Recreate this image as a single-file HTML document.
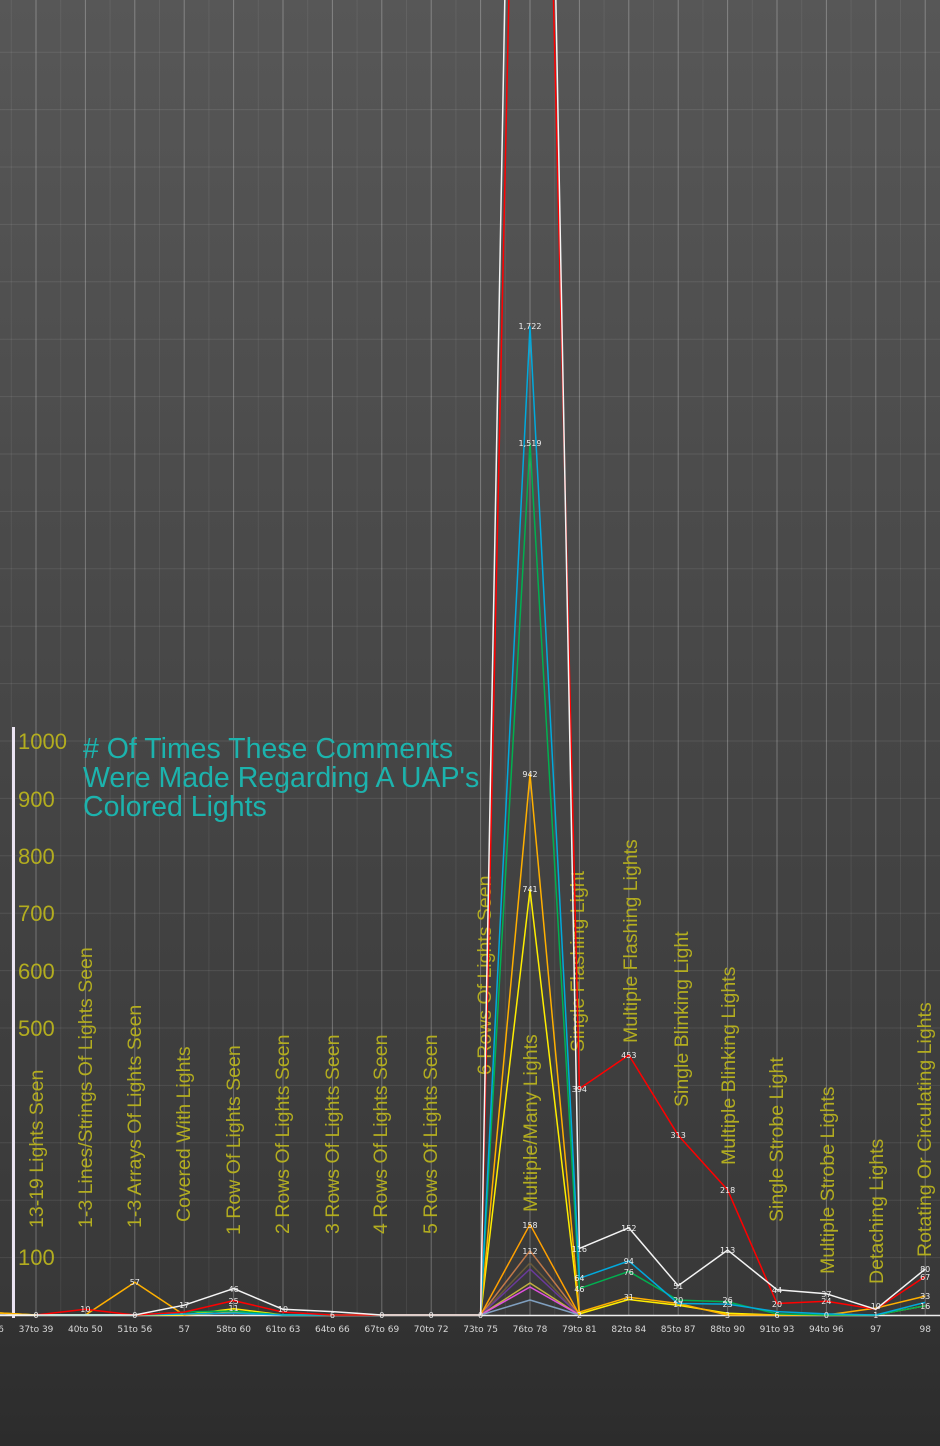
<!DOCTYPE html>
<html><head><meta charset="utf-8"><style>
html,body{margin:0;padding:0;background:#2f2f2f}
svg{display:block}
.cat{font-family:"Liberation Sans",sans-serif;font-size:19.5px;fill:#b3ad1f}
.yl{font-family:"Liberation Sans",sans-serif;font-size:22px;fill:#b3ad1f}
.xl{font-family:"DejaVu Sans",sans-serif;font-size:9px;fill:#d8d8d8;text-anchor:middle}
.v{font-family:"DejaVu Sans",sans-serif;font-size:8px;fill:#eee;text-anchor:middle}
.t{font-family:"Liberation Sans",sans-serif;font-size:28.5px;fill:#1cb3ad}
polyline{fill:none;stroke-width:1.5;stroke-linejoin:round}
</style></head><body>
<svg width="940" height="1446" viewBox="0 0 940 1446" xmlns="http://www.w3.org/2000/svg">
<defs>
<linearGradient id="bg" x1="0" y1="0" x2="0" y2="1"><stop offset="0" stop-color="#575757"/><stop offset="1" stop-color="#383838"/></linearGradient>
<linearGradient id="bg2" x1="0" y1="0" x2="0" y2="1"><stop offset="0" stop-color="#323232"/><stop offset="1" stop-color="#2c2c2c"/></linearGradient>
</defs>
<rect x="0" y="0" width="940" height="1316" fill="url(#bg)"/>
<rect x="0" y="1316" width="940" height="130" fill="url(#bg2)"/>
<g stroke="#ffffff" stroke-opacity="0.09" stroke-width="1">
<line x1="0" y1="1257.6" x2="940" y2="1257.6"/><line x1="0" y1="1200.2" x2="940" y2="1200.2"/><line x1="0" y1="1142.8" x2="940" y2="1142.8"/><line x1="0" y1="1085.4" x2="940" y2="1085.4"/><line x1="0" y1="1028" x2="940" y2="1028"/><line x1="0" y1="970.6" x2="940" y2="970.6"/><line x1="0" y1="913.2" x2="940" y2="913.2"/><line x1="0" y1="855.8" x2="940" y2="855.8"/><line x1="0" y1="798.4" x2="940" y2="798.4"/><line x1="0" y1="741" x2="940" y2="741"/><line x1="0" y1="683.6" x2="940" y2="683.6"/><line x1="0" y1="626.2" x2="940" y2="626.2"/><line x1="0" y1="568.8" x2="940" y2="568.8"/><line x1="0" y1="511.4" x2="940" y2="511.4"/><line x1="0" y1="454" x2="940" y2="454"/><line x1="0" y1="396.6" x2="940" y2="396.6"/><line x1="0" y1="339.2" x2="940" y2="339.2"/><line x1="0" y1="281.8" x2="940" y2="281.8"/><line x1="0" y1="224.4" x2="940" y2="224.4"/><line x1="0" y1="167" x2="940" y2="167"/><line x1="0" y1="109.6" x2="940" y2="109.6"/><line x1="0" y1="52.2" x2="940" y2="52.2"/>
</g>
<g stroke="#ffffff" stroke-opacity="0.07" stroke-width="1">
<line x1="11.3" y1="0" x2="11.3" y2="1315"/><line x1="60.7" y1="0" x2="60.7" y2="1315"/><line x1="110.1" y1="0" x2="110.1" y2="1315"/><line x1="159.5" y1="0" x2="159.5" y2="1315"/><line x1="208.9" y1="0" x2="208.9" y2="1315"/><line x1="258.3" y1="0" x2="258.3" y2="1315"/><line x1="307.7" y1="0" x2="307.7" y2="1315"/><line x1="357.1" y1="0" x2="357.1" y2="1315"/><line x1="406.5" y1="0" x2="406.5" y2="1315"/><line x1="455.9" y1="0" x2="455.9" y2="1315"/><line x1="505.3" y1="0" x2="505.3" y2="1315"/><line x1="554.7" y1="0" x2="554.7" y2="1315"/><line x1="604.1" y1="0" x2="604.1" y2="1315"/><line x1="653.5" y1="0" x2="653.5" y2="1315"/><line x1="702.9" y1="0" x2="702.9" y2="1315"/><line x1="752.3" y1="0" x2="752.3" y2="1315"/><line x1="801.7" y1="0" x2="801.7" y2="1315"/><line x1="851.1" y1="0" x2="851.1" y2="1315"/><line x1="900.5" y1="0" x2="900.5" y2="1315"/>
</g>
<g stroke="#ffffff" stroke-opacity="0.28" stroke-width="1">
<line x1="36" y1="0" x2="36" y2="1315"/><line x1="85.4" y1="0" x2="85.4" y2="1315"/><line x1="134.8" y1="0" x2="134.8" y2="1315"/><line x1="184.2" y1="0" x2="184.2" y2="1315"/><line x1="233.6" y1="0" x2="233.6" y2="1315"/><line x1="283" y1="0" x2="283" y2="1315"/><line x1="332.4" y1="0" x2="332.4" y2="1315"/><line x1="381.8" y1="0" x2="381.8" y2="1315"/><line x1="431.2" y1="0" x2="431.2" y2="1315"/><line x1="480.6" y1="0" x2="480.6" y2="1315"/><line x1="530" y1="0" x2="530" y2="1315"/><line x1="579.4" y1="0" x2="579.4" y2="1315"/><line x1="628.8" y1="0" x2="628.8" y2="1315"/><line x1="678.2" y1="0" x2="678.2" y2="1315"/><line x1="727.6" y1="0" x2="727.6" y2="1315"/><line x1="777" y1="0" x2="777" y2="1315"/><line x1="826.4" y1="0" x2="826.4" y2="1315"/><line x1="875.8" y1="0" x2="875.8" y2="1315"/><line x1="925.2" y1="0" x2="925.2" y2="1315"/>
</g>
<line x1="0" y1="1315.5" x2="940" y2="1315.5" stroke="#eee" stroke-width="1.5"/>
<rect x="12" y="727" width="3" height="591" fill="#ebe4f3"/>

<g class="yl">
<text x="18" y="749">1000</text><text x="18" y="807">900</text><text x="18" y="864">800</text><text x="18" y="921">700</text><text x="18" y="979">600</text><text x="18" y="1036">500</text><text x="18" y="1265">100</text>
</g>
<g class="t"><text x="83" y="758">&#35; Of Times These Comments</text><text x="83" y="787">Were Made Regarding A UAP's</text><text x="83" y="816">Colored Lights</text></g>

<g class="cat">
<text transform="translate(43,1228) rotate(-90)">13-19 Lights Seen</text>
<text transform="translate(92,1228) rotate(-90)">1-3 Lines/Strings Of Lights Seen</text>
<text transform="translate(141,1228) rotate(-90)">1-3 Arrays Of Lights Seen</text>
<text transform="translate(190,1222) rotate(-90)">Covered With Lights</text>
<text transform="translate(240,1235) rotate(-90)">1 Row Of Lights Seen</text>
<text transform="translate(289,1234) rotate(-90)">2 Rows Of Lights Seen</text>
<text transform="translate(339,1234) rotate(-90)">3 Rows Of Lights Seen</text>
<text transform="translate(387,1234) rotate(-90)">4 Rows Of Lights Seen</text>
<text transform="translate(437,1234) rotate(-90)">5 Rows Of Lights Seen</text>
<text transform="translate(491,1075) rotate(-90)">6 Rows Of Lights Seen</text>
<text transform="translate(537,1212) rotate(-90)">Multiple/Many Lights</text>
<text transform="translate(584,1052) rotate(-90)">Single Flashing Light</text>
<text transform="translate(637,1043) rotate(-90)">Multiple Flashing Lights</text>
<text transform="translate(688,1107) rotate(-90)">Single Blinking Light</text>
<text transform="translate(735,1165) rotate(-90)">Multiple Blinking Lights</text>
<text transform="translate(783,1222) rotate(-90)">Single Strobe Light</text>
<text transform="translate(834,1274) rotate(-90)">Multiple Strobe Lights</text>
<text transform="translate(883,1284) rotate(-90)">Detaching Lights</text>
<text transform="translate(931,1257) rotate(-90)">Rotating Or Circulating Lights</text>
</g>

<polyline stroke="#6a5a3a" points="480.6,1315 530,1263 579.4,1315"/>
<polyline stroke="#c07848" points="480.6,1315 530,1250.7 579.4,1315"/>
<polyline stroke="#6a3a9a" points="480.6,1315 530,1269 579.4,1315"/>
<polyline stroke="#c0b040" points="480.6,1315 530,1283 579.4,1315"/>
<polyline stroke="#e050e0" points="480.6,1315 530,1287 579.4,1315"/>
<polyline stroke="#80a0c0" points="480.6,1315 530,1300 579.4,1315"/>
<polyline stroke="#ffa000" points="480.6,1315 530,1224.3 579.4,1315"/>
<polyline stroke="#ffee00" points="0,1313 36,1315 85.4,1315 134.8,1315 184.2,1315 233.6,1308.7 283,1315 332.4,1315 381.8,1315 431.2,1315 480.6,1315 530,889.7 579.4,1313.9 628.8,1299.5 678.2,1305.2 727.6,1313.3 777,1315 826.4,1315 875.8,1315 925.2,1305.8"/>
<polyline stroke="#ffb000" points="0,1313 36,1315 85.4,1315 134.8,1282.3 184.2,1315 233.6,1312.1 283,1315 332.4,1315 381.8,1315 431.2,1315 480.6,1315 530,774.3 579.4,1312.1 628.8,1297.2 678.2,1303.5 727.6,1315 777,1315 826.4,1315 875.8,1308.1 925.2,1296.1"/>
<polyline stroke="#00b050" points="36,1315 134.8,1315 184.2,1312 233.6,1311 283,1315 431.2,1315 480.6,1315 530,443.1 579.4,1288.6 628.8,1271.4 678.2,1300.1 727.6,1301.8 777,1313.9 826.4,1315 875.8,1315 925.2,1305.8"/>
<polyline stroke="#00aadd" points="36,1315 134.8,1315 184.2,1314 233.6,1313 283,1315 431.2,1315 480.6,1315 530,326.6 579.4,1278.3 628.8,1261 678.2,1303.5 727.6,1304.1 777,1311.6 826.4,1313.9 875.8,1315 925.2,1302.4"/>
<polyline stroke="#ff0000" points="36,1315 85.4,1309.3 134.8,1315 184.2,1312.1 233.6,1300.6 283,1312.1 332.4,1315 431.2,1315 480.6,1315 530,-986 579.4,1088.8 628.8,1055 678.2,1135.3 727.6,1189.9 777,1303.5 826.4,1301.2 875.8,1309.3 925.2,1276.5"/>
<polyline stroke="#f4f4f4" points="0,1315 36,1315 85.4,1315 134.8,1315 184.2,1305.2 233.6,1288.6 283,1309.3 332.4,1311.6 381.8,1315 431.2,1315 480.6,1315 530,-1370 579.4,1248.4 628.8,1227.8 678.2,1285.7 727.6,1250.1 777,1289.7 826.4,1293.8 875.8,1309.3 925.2,1269.1"/>

<g class="v">
<text x="530" y="329">1,722</text><text x="530" y="446">1,519</text><text x="530" y="777">942</text><text x="530" y="892">741</text>
<text x="530" y="1228">158</text><text x="530" y="1254">112</text>
<text x="579.4" y="1092">394</text><text x="628.8" y="1058">453</text><text x="678.2" y="1138">313</text><text x="727.6" y="1193">218</text>
<text x="579.4" y="1252">116</text><text x="628.8" y="1231">152</text><text x="678.2" y="1289">51</text><text x="727.6" y="1253">113</text><text x="777" y="1293">44</text><text x="826.4" y="1297">37</text><text x="925.2" y="1272">80</text><text x="925.2" y="1280">67</text>
<text x="579.4" y="1281">64</text><text x="579.4" y="1292">46</text><text x="628.8" y="1264">94</text><text x="628.8" y="1275">76</text>
<text x="628.8" y="1300">31</text><text x="678.2" y="1303">20</text><text x="678.2" y="1307">17</text><text x="727.6" y="1303">26</text><text x="727.6" y="1307">23</text><text x="777" y="1307">20</text><text x="826.4" y="1304">24</text><text x="875.8" y="1309">10</text><text x="925.2" y="1299">33</text><text x="925.2" y="1309">16</text>
<text x="134.8" y="1285">57</text><text x="85.4" y="1312">10</text><text x="233.6" y="1292">46</text><text x="233.6" y="1304">25</text><text x="233.6" y="1311">11</text><text x="184.2" y="1308">17</text><text x="283" y="1312">10</text>
<text x="36" y="1318">0</text><text x="134.8" y="1318">0</text><text x="332.4" y="1318">6</text><text x="381.8" y="1318">0</text><text x="431.2" y="1318">0</text><text x="480.6" y="1318">0</text><text x="579.4" y="1318">2</text><text x="727.6" y="1318">3</text><text x="777" y="1318">6</text><text x="826.4" y="1318">0</text><text x="875.8" y="1318">1</text>
</g>
<g class="xl">
<text x="1" y="1332">6</text><text x="36" y="1332">37to 39</text><text x="85.4" y="1332">40to 50</text><text x="134.8" y="1332">51to 56</text><text x="184.2" y="1332">57</text><text x="233.6" y="1332">58to 60</text><text x="283" y="1332">61to 63</text><text x="332.4" y="1332">64to 66</text><text x="381.8" y="1332">67to 69</text><text x="431.2" y="1332">70to 72</text><text x="480.6" y="1332">73to 75</text><text x="530" y="1332">76to 78</text><text x="579.4" y="1332">79to 81</text><text x="628.8" y="1332">82to 84</text><text x="678.2" y="1332">85to 87</text><text x="727.6" y="1332">88to 90</text><text x="777" y="1332">91to 93</text><text x="826.4" y="1332">94to 96</text><text x="875.8" y="1332">97</text><text x="925.2" y="1332">98</text>
</g>
</svg>
</body></html>
